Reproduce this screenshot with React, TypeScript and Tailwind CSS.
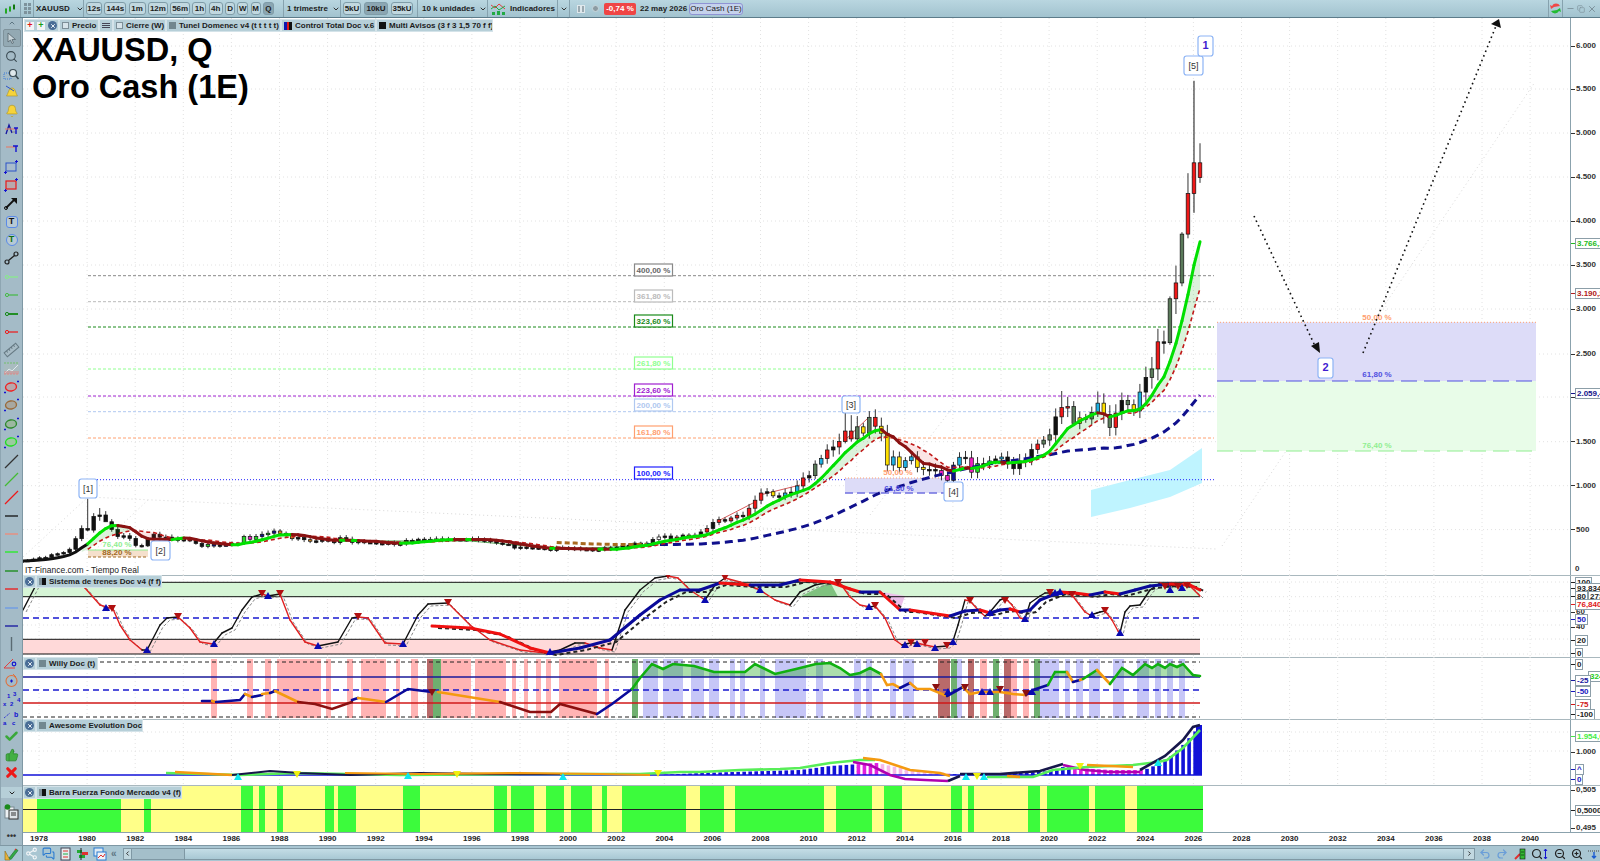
import React from "react";
import { Bell, Search, ZoomIn, ZoomOut, Share2, MessagesSquare, Undo2, Redo2, ThumbsUp, Check, X, ChevronDown, ChevronUp, ChevronLeft, ChevronRight, Minus, Copy } from "lucide-react";

type Pt = [number, number];

const closes = [
  140,145,150,165, 180,185,215,226, 240,277,397,512, 494,650,666,589, 500,420,430,400, 320,315,397,448, 414,414,395,381, 388,375,343,309,
  330,317,326,327, 345,345,420,390, 420,447,459,484, 458,436,397,410, 385,372,367,401, 368,352,408,391, 355,367,354,353, 341,343,349,332,
  337,378,355,391, 390,385,394,383, 391,387,384,387, 396,382,379,369, 348,334,332,290, 301,296,293,288, 279,261,299,290, 277,288,273,274,
  258,270,293,276, 302,318,323,347, 334,346,388,416, 427,395,415,438, 427,437,473,513, 582,613,599,632, 663,650,743,834, 916,930,884,880,
  916,926,996,1087, 1113,1244,1307,1405, 1439,1500,1620,1531, 1668,1597,1776,1675, 1595,1234,1326,1205, 1283,1327,1208,1184, 1183,1172,1115,1060,
  1233,1322,1315,1152, 1249,1241,1280,1303, 1325,1252,1192,1281, 1292,1409,1472,1517, 1577,1781,1886,1898, 1707,1770,1757,1829, 1937,1807,1660,1824,
  1969,1919,1849,2063, 2230,2326,2634,2624, 3123,3303,3858,4319, 4668,4500,
];
const N = closes.length;
const P = (p: number) => 45.6 + (6000 - p) * 0.088;
const XI = (i: number) => 1200 - (N - 1 - i) * 6.0125;
const sma = (i: number, n: number) => {
  const s = closes.slice(Math.max(0, i - n + 1), i + 1);
  return s.reduce((a, b) => a + b, 0) / s.length;
};
const colorMap: Record<string, string> = { k: "#111111", r: "#f01818", y: "#ffe000", c: "#20b0e0", m: "#f020c0", g: "#20e020", b: "#101090", d: "#5a7a5a", w: "#ffffff", o: "#e89020", n: "#a06820" };
const colorStr = ("kkkkwkkrkrkkrkrkrrkr" + "rrkykckcrkdcrkrrrdydryycyccyykkmmbckmgkc" + "kckkkdkrddkrrdyrdcydrkdyckdrk" + "drdrrr").padStart(N, "k");
const earlyColor: [number, string][] = [[208,"g"],[216,"b"],[228,"b"],[240,"b"],[244,"g"],[250,"m"],[256,"g"],[262,"b"],[268,"g"],[275,"b"],[280,"o"],[292,"o"],[310,"o"]];
const candleColor = (i: number) => {
  const x = XI(i);
  const e = earlyColor.find((c) => Math.abs(c[0] - x) < 3);
  return colorMap[e ? e[1] : colorStr[i]];
};
const hiLo: Record<number, [number, number]> = {
  0: [4890, 4440], 1: [5600, 4100], 2: [4550, 3810], 3: [3880, 3265], 4: [3500, 2950], 5: [3150, 2600],
  185: [850, 480], 183: [745, 600], 182: [710, 600], 59: [1938, 1480], 58: [1800, 1500], 57: [1790, 1500], 23: [2075, 1700], 17: [2070, 1780], 21: [1960, 1680],
};
const Candles = () => (
  <g>
    {closes.map((c, i) => {
      if (i === 0) return null;
      const o = closes[i - 1];
      const back = N - 1 - i;
      const wob = 0.02 + 0.035 * Math.abs(Math.sin(i * 12.9898));
      const [hi, lo] = hiLo[back] ?? [Math.max(o, c) * (1 + wob) + 8, Math.min(o, c) * (1 - wob) - 6];
      const x = XI(i);
      const t = P(Math.max(o, c));
      const b = P(Math.min(o, c));
      return (
        <g key={i}>
          <line x1={x} x2={x} y1={P(hi)} y2={P(lo)} stroke={back === 1 ? "#111" : "#333"} strokeWidth={1} />
          <rect x={x - 1.8} y={t} width={3.6} height={Math.max(b - t, 1.5)} fill={candleColor(i)} stroke="#111" strokeWidth={0.7} />
        </g>
      );
    })}
  </g>
);
const line = (pts: Pt[]) => pts.map((p) => p[0].toFixed(1) + "," + p[1].toFixed(1)).join(" ");
const Segs = ({ pts, up, down, w }: { pts: Pt[]; up: string; down: string; w: number }) => (
  <g>
    {pts.slice(1).map((p, i) => (
      <line key={i} x1={pts[i][0]} y1={pts[i][1]} x2={p[0]} y2={p[1]} stroke={p[1] <= pts[i][1] ? up : down} strokeWidth={w} strokeLinecap="round" />
    ))}
  </g>
);
const Tri = ({ x, y, up, c }: { x: number; y: number; up: boolean; c: string }) => (
  <polygon points={up ? `${x - 4},${y + 3} ${x + 4},${y + 3} ${x},${y - 4}` : `${x - 4},${y - 4} ${x + 4},${y - 4} ${x},${y + 3}`} fill={c} />
);
const Grid = ({ ys, top, bottom }: { ys: number[]; top: number; bottom: number }) => (
  <g stroke="#e2e2e2" strokeWidth={1} strokeDasharray="1 3">
    {Array.from({ length: 32 }, (_, k) => 39 + 48.1 * k).map((x) => (
      <line key={x} x1={x} x2={x} y1={top} y2={bottom} />
    ))}
    {ys.map((y) => (
      <line key={y} x1={23} x2={1570} y1={y} y2={y} />
    ))}
  </g>
);

const fibs: [string, number, number, number, string, string][] = [
  ["400,00 %", 275.7, 264, 276, "#888888", "3 2"],
  ["361,80 %", 301.7, 290, 302, "#bbbbbb", "3 2"],
  ["323,60 %", 327, 315, 327, "#1a8a1a", "3 2"],
  ["261,80 %", 369, 357, 369, "#90ff90", "3 2"],
  ["223,60 %", 396, 384, 396, "#a020d0", "3 2"],
  ["200,00 %", 411.7, 399, 411, "#b0c8f0", "3 2"],
  ["161,80 %", 438, 426, 438, "#ffa070", "3 2"],
  ["100,00 %", 479.7, 467, 479, "#2020ff", "1 2"],
];
const Box = ({ x, y, w, h, t, c = "#333333", big = false }: { x: number; y: number; w: number; h: number; t: string; c?: string; big?: boolean }) => (
  <g>
    <rect x={x} y={y} width={w} height={h} rx={2.5} fill="#ffffff" stroke="#8db4f5" strokeWidth={1.2} />
    <text x={x + w / 2} y={y + h / 2 + 3} textAnchor="middle" fontSize={big ? 11 : 9} fontWeight={big ? 700 : 400} fill={c}>{t}</text>
  </g>
);
const Pct = ({ x, y, t, c }: { x: number; y: number; t: string; c: string }) => (
  <text x={x} y={y} textAnchor="middle" fontSize={8} fontWeight={700} fill={c}>{t}</text>
);

const MainChart = () => {
  const idx = closes.map((_, i) => i);
  const g = idx.map((i) => [XI(i), P(sma(i, 7))] as Pt);
  const r = idx.map((i) => [XI(i), P(sma(i, 11))] as Pt);
  const n = idx.map((i) => [XI(i), P(sma(i, 40))] as Pt);
  return (
    <svg viewBox="23 18 1547 557" width={1547} height={557} className="block">
      <Grid ys={[46, 89, 133, 177, 221, 265, 309, 354, 397, 441.7, 485.7, 529.6]} top={18} bottom={575} />
      <polyline points="23,557 88,497 1216,549" fill="none" stroke="#d8d8d8" strokeDasharray="1 3" />
      <polyline points="95,550 148,500" fill="none" stroke="#d8d8d8" strokeDasharray="1 3" />
      <polyline points="870,515 953,407" fill="none" stroke="#d8d8d8" strokeDasharray="1 3" />
      <polyline points="1222,546 1535,82" fill="none" stroke="#d8d8d8" strokeDasharray="1 3" />
      <polyline points="342,541 470,541 560,549 640,546" fill="none" stroke="#2a8a2a" strokeWidth={0.8} />
      {/* right retracement box */}
      <rect x={1217} y={322.3} width={319} height={58.7} fill="#dddcf8" />
      <rect x={1217} y={381} width={319} height={70} fill="#e8fce8" />
      <line x1={1217} x2={1536} y1={322.3} y2={322.3} stroke="#ffa070" strokeDasharray="1 2" />
      <line x1={1217} x2={1536} y1={381} y2={381} stroke="#5050e0" strokeDasharray="16 7" />
      <line x1={1217} x2={1536} y1={451} y2={451} stroke="#90ee90" strokeDasharray="16 7" />
      {/* cyan area */}
      <polygon points="1091,490 1130,480 1170,470 1202,448 1202,483 1170,497 1130,508 1091,517" fill="#bff4ff" />
      {fibs.map((f) => (
        <line key={f[0]} x1={88} x2={1214} y1={f[1]} y2={f[1]} stroke={f[4]} strokeDasharray={f[5]} strokeWidth={1} />
      ))}
      {/* small retracements */}
      <rect x={88} y={550} width={60} height={7} fill="#f5e0cc" />
      <line x1={88} x2={148} y1={550} y2={550} stroke="#90ee90" />
      <line x1={88} x2={148} y1={557} y2={557} stroke="#a06820" strokeDasharray="3 2" />
      <rect x={845} y={478} width={102} height={15} fill="#dddcf8" />
      <line x1={845} x2={947} y1={478} y2={478} stroke="#ffa070" strokeDasharray="1 2" />
      <line x1={845} x2={947} y1={493} y2={493} stroke="#7070e0" strokeWidth={1.5} strokeDasharray="8 4" />
      <polyline points="720,520 755,502" fill="none" stroke="#d03030" strokeWidth={0.8} />
      <polyline points="760,495 800,485" fill="none" stroke="#d03030" strokeWidth={0.8} />
      <polyline points="845,440 868,418" fill="none" stroke="#d03030" strokeWidth={0.8} />
      <Candles />
      {g.slice(12).map((p, k) => {
        const i = k + 12;
        const q = r[i];
        const pg = g[i - 1];
        const pr = r[i - 1];
        return <polygon key={i} points={line([pg, p, q, pr])} fill={p[1] <= q[1] ? "#00a000" : "#e04040"} fillOpacity={0.14} />;
      })}
      <polyline points={line(n.slice(90, 106))} fill="none" stroke="#a86a20" strokeWidth={3} strokeDasharray="5 3" />
      <polyline points={line(n.slice(105))} fill="none" stroke="#10108c" strokeWidth={3} strokeDasharray="8 5" />
      <polyline points={line(r.slice(12))} fill="none" stroke="#c01818" strokeWidth={1.6} strokeDasharray="4 3" />
      <polyline points={line(g.slice(0, 13))} fill="none" stroke="#111111" strokeWidth={3} />
      <Segs pts={g.slice(12)} up="#00e000" down="#8a1212" w={3} />
      {/* labels */}
      {fibs.map((f) => (
        <g key={f[0] + "b"}>
          <rect x={634.5} y={f[2]} width={38} height={f[3] - f[2]} fill="#ffffff" stroke={f[4]} strokeWidth={1.2} />
          <text x={653.5} y={f[3] - 3} textAnchor="middle" fontSize={8} fontWeight={700} fill={f[4] === "#888888" ? "#666" : f[4]}>{f[0]}</text>
        </g>
      ))}
      <Pct x={117} y={547} t="76,40 %" c="#90ee90" />
      <Pct x={117} y={555} t="88,20 %" c="#a06820" />
      <Pct x={898} y={475} t="50,00 %" c="#ffa070" />
      <Pct x={899} y={491} t="61,80 %" c="#5050e0" />
      <Pct x={1377} y={320} t="50,00 %" c="#ffa070" />
      <Pct x={1377} y={377} t="61,80 %" c="#5050e0" />
      <Pct x={1377} y={448} t="76,40 %" c="#90ee90" />
      <Box x={79} y={479} w={18} h={19} t="[1]" />
      <Box x={151} y={541} w={19} h={19} t="[2]" />
      <Box x={842} y={396} w={18} h={17} t="[3]" />
      <Box x={944} y={482} w={19} h={19} t="[4]" />
      <Box x={1184} y={56} w={19} h={19} t="[5]" />
      <Box x={1198} y={36} w={15} h={20} t="1" c="#4020d0" big />
      <Box x={1318} y={358} w={15} h={20} t="2" c="#4020d0" big />
      {/* arrows */}
      <line x1={1254} y1={216} x2={1315} y2={346} stroke="#111" strokeWidth={1.6} strokeDasharray="1.6 3.4" />
      <polygon points="1311,346 1319,342 1320,353" fill="#111" />
      <line x1={1363} y1={353} x2={1496} y2={26} stroke="#111" strokeWidth={1.6} strokeDasharray="1.6 3.4" />
      <polygon points="1491,24 1499,19 1501,28" fill="#111" />
      <text x={25} y={573} fontSize={8.5} fill="#222222">IT-Finance.com - Tiempo Real</text>
    </svg>
  );
};

const sisThin: Pt[] = [[23,610],[36,585],[50,576],[70,578],[85,588],[100,605],[113,609],[120,625],[130,640],[142,650],[147,650],[160,625],[167,618],[178,617],[190,628],[200,642],[213,644],[222,633],[232,628],[242,610],[252,597],[262,594],[268,596],[280,594],[290,620],[305,642],[318,646],[338,642],[352,618],[358,617],[368,618],[385,643],[403,644],[418,615],[428,604],[448,603],[470,625],[490,640],[520,650],[545,653],[560,650],[575,643],[585,643],[600,648],[612,650],[625,610],[640,590],[655,578],[668,576],[678,578],[690,590],[705,600],[715,585],[725,578],[740,582],[760,590],[775,600],[790,605],[800,592],[815,585],[830,582],[840,583],[850,597],[860,605],[870,607],[875,606],[885,618],[895,640],[902,645],[910,643],[917,643],[925,645],[935,647],[947,646],[953,641],[958,625],[965,600],[970,601],[980,612],[985,616],[990,612],[1000,600],[1005,598],[1012,605],[1020,618],[1025,619],[1030,603],[1040,596],[1045,593],[1055,593],[1060,592],[1072,595],[1085,612],[1090,615],[1097,613],[1100,612],[1105,611],[1112,620],[1118,631],[1120,633],[1125,612],[1130,606],[1140,605],[1150,590],[1160,583],[1170,586],[1180,584],[1190,586],[1200,596]];
const sisThick: Pt[] = [[432,626],[470,628],[500,634],[530,648],[550,653],[580,648],[610,640],[640,615],[660,600],[680,590],[700,590],[720,583],[750,585],[780,585],[800,580],[830,582],[850,589],[860,592],[880,592],[900,610],[910,610],[950,616],[965,611],[980,610],[990,613],[1000,610],[1010,609],[1020,612],[1030,610],[1040,600],[1060,592],[1075,593],[1090,595],[1105,592],[1120,594],[1135,590],[1150,586],[1170,584],[1190,585],[1200,590]];
const downTs: Pt[] = [[112,609],[178,617],[262,594],[280,594],[358,617],[448,603],[668,576],[725,578],[838,583],[875,606],[911,643],[925,643],[947,646],[970,601],[1005,601],[1050,593],[1072,595],[1105,611],[1165,587],[1178,587],[1187,586]];
const upTs: Pt[] = [[106,608],[147,650],[214,644],[268,596],[318,646],[403,644],[550,652],[705,600],[760,590],[869,607],[905,645],[917,644],[935,648],[953,642],[990,613],[1025,619],[1055,593],[1060,592],[1092,615],[1120,633],[1170,590],[1182,588]];

const SistemaChart = () => (
  <svg viewBox="23 575 1547 82" width={1547} height={82} className="block">
    <Grid ys={[582, 596.7, 611, 625, 639, 654]} top={575} bottom={657} />
    <rect x={23} y={582.3} width={1177} height={14.4} fill="#d6f5d6" />
    <rect x={23} y={639.3} width={1177} height={14.7} fill="#ffd9d9" />
    <polygon points="800,596.7 830,582 838,596.7" fill="#7fc27f" />
    <polygon points="882,592 900,610 905,596" fill="#ecc0ea" />
    <g stroke="#111" strokeWidth={1}>
      <line x1={23} x2={1200} y1={582.3} y2={582.3} />
      <line x1={23} x2={1200} y1={596.7} y2={596.7} />
      <line x1={23} x2={1200} y1={639.3} y2={639.3} />
      <line x1={23} x2={1200} y1={654} y2={654} />
    </g>
    <line x1={23} x2={1200} y1={618} y2={618} stroke="#1818d0" strokeWidth={1.5} strokeDasharray="6 4" />
    <polyline points={line(sisThin.map((p) => [p[0] + 3, p[1] + 2] as Pt))} fill="none" stroke="#888" strokeWidth={1} strokeDasharray="3 2" />
    <Segs pts={sisThin} up="#111111" down="#e02020" w={1.4} />
    <polyline points={line(sisThick.map((p) => [p[0] + 6, p[1] + 2] as Pt))} fill="none" stroke="#222" strokeWidth={2} strokeDasharray="4 3" />
    <Segs pts={sisThick} up="#0a0a9a" down="#f01010" w={3} />
    {downTs.map((t) => <Tri key={"d" + t[0]} x={t[0]} y={t[1]} up={false} c="#b01010" />)}
    {upTs.map((t) => <Tri key={"u" + t[0]} x={t[0]} y={t[1]} up c="#0a0ab0" />)}
  </svg>
);

const willyBands: [number, number, string][] = [
  [211,217,"#ffb3b3"],[247,253,"#ffb3b3"],[265,271,"#ffb3b3"],[277,321,"#ffb3b3"],[326,331,"#ffb3b3"],[347,353,"#ffb3b3"],[361,386,"#ffb3b3"],[396,400,"#ffb3b3"],[411,418,"#ffb3b3"],[427,433,"#b96a6a"],[433,441,"#6fb06f"],[441,471,"#ffb3b3"],[475,506,"#ffb3b3"],[512,516,"#ffb3b3"],[524,528,"#ffb3b3"],[536,541,"#ffb3b3"],[546,551,"#ffb3b3"],[559,597,"#ffb3b3"],[605,609,"#ffb3b3"],[632,638,"#6fb06f"],
  [643,658,"#c6c6f7"],[663,683,"#c6c6f7"],[691,704,"#c6c6f7"],[709,719,"#c6c6f7"],[730,735,"#c6c6f7"],[740,745,"#c6c6f7"],[760,765,"#c6c6f7"],[775,806,"#c6c6f7"],[816,823,"#c6c6f7"],
  [854,861,"#c6c6f7"],[866,872,"#c6c6f7"],[890,896,"#c6c6f7"],[903,914,"#c6c6f7"],[938,950,"#b96a6a"],[951,957,"#6fb06f"],[957,962,"#c6c6f7"],[968,974,"#b96a6a"],[980,987,"#ffb3b3"],[993,999,"#6fb06f"],[1004,1011,"#b96a6a"],[1011,1017,"#ffb3b3"],[1023,1029,"#ffb3b3"],[1034,1040,"#6fb06f"],[1040,1059,"#c6c6f7"],[1065,1070,"#c6c6f7"],[1076,1083,"#c6c6f7"],[1089,1100,"#c6c6f7"],[1113,1124,"#c6c6f7"],[1137,1149,"#c6c6f7"],[1155,1161,"#c6c6f7"],[1167,1173,"#c6c6f7"],[1179,1185,"#c6c6f7"],
];
const wc = { n: "#0a0a9a", o: "#f49a10", g: "#10b010", r: "#8a1010" };
const willy: [string, Pt[]][] = [
  [wc.n, [[202,701],[212,701]]],
  [wc.o, [[212,701],[216,702]]],
  [wc.n, [[216,702],[240,700],[245,694]]],
  [wc.o, [[245,694],[252,697]]],
  [wc.n, [[252,697],[262,695]]],
  [wc.o, [[262,694],[270,693]]],
  [wc.n, [[270,693],[275,691]]],
  [wc.o, [[275,691],[298,702]]],
  [wc.r, [[298,702],[315,704],[332,709],[352,702]]],
  [wc.n, [[352,700],[358,698]]],
  [wc.o, [[358,698],[386,702]]],
  [wc.n, [[386,702],[408,689],[432,692]]],
  [wc.o, [[438,692],[500,702]]],
  [wc.r, [[500,702],[530,712],[551,712],[560,704],[597,714]]],
  [wc.n, [[597,714],[612,704],[632,689]]],
  [wc.g, [[632,689],[640,678],[652,664],[663,669],[673,664],[694,666],[714,672],[745,672],[755,664],[775,674],[796,669],[816,664],[830,663],[840,668],[850,675],[860,673],[870,668],[881,674]]],
  [wc.o, [[881,674],[887,685],[893,684],[900,688]]],
  [wc.n, [[900,688],[910,683]]],
  [wc.o, [[910,683],[917,689],[930,689],[947,696]]],
  [wc.n, [[947,696],[963,687]]],
  [wc.o, [[963,687],[970,694],[980,692],[1000,692],[1013,694],[1026,695]]],
  [wc.n, [[1026,695],[1033,690],[1048,685]]],
  [wc.g, [[1048,685],[1055,672],[1067,672]]],
  [wc.o, [[1067,672],[1073,682]]],
  [wc.n, [[1073,682],[1080,680]]],
  [wc.o, [[1080,680],[1083,679]]],
  [wc.g, [[1083,679],[1097,670]]],
  [wc.o, [[1097,670],[1110,684]]],
  [wc.g, [[1110,684],[1122,668],[1133,675],[1145,664],[1152,668],[1158,664],[1165,668],[1170,664],[1177,667],[1183,664],[1193,675],[1200,676]]],
];
const WillyChart = () => (
  <svg viewBox="23 657 1547 62" width={1547} height={62} className="block">
    <Grid ys={[] as number[]} top={657} bottom={719} />
    {willyBands.map((b) => <rect key={b[0]} x={b[0]} y={659} width={b[1] - b[0]} height={59} fill={b[2]} />)}
    <polygon points="632,677 640,678 652,664 663,669 673,664 694,666 714,672 745,672 755,664 775,674 796,669 816,664 830,663 840,668 850,675 860,673 870,668 881,674 881,677" fill="#10a010" fillOpacity={0.35} />
    <polygon points="1055,677 1055,672 1067,672 1073,677 1085,677 1097,670 1105,677 1115,677 1122,668 1133,675 1145,664 1152,668 1158,664 1165,668 1170,664 1177,667 1183,664 1193,675 1200,676 1200,677" fill="#10a010" fillOpacity={0.35} />
    <line x1={23} x2={1200} y1={662} y2={662} stroke="#222" strokeDasharray="4 3" />
    <line x1={23} x2={1200} y1={677} y2={677} stroke="#1a1a9a" strokeWidth={1.6} />
    <line x1={23} x2={1200} y1={690} y2={690} stroke="#1818d0" strokeWidth={1.5} strokeDasharray="6 4" />
    <line x1={23} x2={1200} y1={703} y2={703} stroke="#d01818" strokeWidth={1.4} />
    <line x1={23} x2={1200} y1={717} y2={717} stroke="#222" strokeDasharray="4 3" />
    {willy.map((s, i) => <polyline key={i} points={line(s[1])} fill="none" stroke={s[0]} strokeWidth={2.6} strokeLinecap="round" />)}
    {[[432,693],[936,688],[965,688],[1000,690],[1026,694]].map((t) => <Tri key={"wd" + t[0]} x={t[0]} y={t[1]} up={false} c="#8a1010" />)}
    {[[948,692],[982,692],[990,692],[1032,692]].map((t) => <Tri key={"wu" + t[0]} x={t[0]} y={t[1]} up c="#0a0ab0" />)}
  </svg>
);

const interp = (tbl: Pt[], x: number) => {
  for (let i = 1; i < tbl.length; i++) {
    if (x <= tbl[i][0]) {
      const [x0, y0] = tbl[i - 1];
      const [x1, y1] = tbl[i];
      return y0 + ((x - x0) / (x1 - x0)) * (y1 - y0);
    }
  }
  return tbl[tbl.length - 1][1];
};
const barTop: Pt[] = [[660,775],[700,773],[800,770],[830,766],[860,764],[877,763],[910,770],[947,773],[960,775],[990,775],[1050,771],[1063,767],[1110,770],[1143,770],[1150,768],[1170,757],[1183,745],[1200,726]];
const barColor = (x: number) => {
  if (x >= 853 && x < 877) return "#e020e0";
  if (x >= 877 && x < 950) return "#f5b8e8";
  if (x >= 1070 && x < 1143) return "#e020e0";
  return "#1212d8";
};
const AwesomeChart = () => {
  const xs: number[] = [];
  for (let x = 660; x <= 1200; x += 6.0125) xs.push(x);
  return (
    <svg viewBox="23 719 1547 66" width={1547} height={66} className="block">
      <Grid ys={[732, 751]} top={719} bottom={785} />
      {xs.map((x) => {
        const t = interp(barTop, x);
        return <rect key={x} x={x - 1.8} y={t} width={3.6} height={775 - t} fill={barColor(x)} />;
      })}
      <rect x={1196} y={725} width={6} height={50} fill="#1212d8" />
      <line x1={23} x2={1202} y1={775} y2={775} stroke="#1212d8" strokeWidth={1.5} />
      <polyline points="166,773 240,775 295,773 400,775 520,774 640,774 680,772 700,772 740,770 780,769 800,768 830,763 860,760 875,760" fill="none" stroke="#58ee58" strokeWidth={2.6} />
      <polyline points="232,775 270,771 300,773 350,775 420,773 490,774 560,774" fill="none" stroke="#16164a" strokeWidth={2} />
      <polyline points="175,772 232,775" fill="none" stroke="#f49a10" strokeWidth={2.6} />
      <polyline points="345,773 420,774 520,773 600,774 650,775" fill="none" stroke="#f49a10" strokeWidth={2.2} />
      <polyline points="863,758 880,760 910,770 940,773 950,776" fill="none" stroke="#f49a10" strokeWidth={2.6} />
      <polyline points="853,762 870,765 890,775 905,779 925,780 948,781" fill="none" stroke="#b000b0" strokeWidth={2.6} />
      <polyline points="948,781 960,776" fill="none" stroke="#16164a" strokeWidth={2.6} />
      <polyline points="960,774 1000,774 1040,771 1063,764" fill="none" stroke="#16164a" strokeWidth={2.6} />
      <polyline points="1063,765 1085,770 1110,772 1140,772" fill="none" stroke="#b000b0" strokeWidth={2.6} />
      <polyline points="987,777 1033,777 1053,770 1087,767 1133,765 1158,762 1167,760 1183,748 1200,730" fill="none" stroke="#58ee58" strokeWidth={2.6} />
      <polyline points="1087,765 1133,767" fill="none" stroke="#f49a10" strokeWidth={2.6} />
      <polyline points="1007,776 1020,777" fill="none" stroke="#f49a10" strokeWidth={2.6} />
      <polyline points="1140,770 1165,756 1183,740 1193,727 1200,725" fill="none" stroke="#16164a" strokeWidth={2.6} />
      {[[238,777],[408,776],[563,777],[966,777],[984,777],[1158,763]].map((t) => <Tri key={t[0]} x={t[0]} y={t[1]} up c="#10e8f0" />)}
      {[[297,775],[457,775],[658,774],[977,777],[1080,767]].map((t) => <Tri key={t[0]} x={t[0]} y={t[1]} up={false} c="#f0f010" />)}
    </svg>
  );
};

const greenBars: Pt[] = [[37,121],[144,151],[241,253],[259,265],[277,283],[325,334],[338,356],[403,420],[494,507],[511,534],[546,564],[571,592],[602,607],[622,686],[700,724],[735,800],[800,824],[836,872],[884,902],[951,962],[968,974],[1028,1040],[1047,1089],[1095,1125],[1137,1203]];
const BarraChart = () => (
  <div className="relative w-full h-full">
    <div className="absolute inset-y-0 left-0 w-[1180px] bg-[#ffff88]" />
    {greenBars.map((b) => (
      <div key={b[0]} className="absolute inset-y-0 bg-[#3cfb3c]" style={{ left: b[0] - 23, width: b[1] - b[0] }} />
    ))}
    <div className="absolute left-0 w-[1180px] top-[23px] h-px bg-[#222222]" />
  </div>
);

/* axis */
const AxisText = ({ y, t, c = "#333333" }: { y: number; t: string; c?: string }) => (
  <div className="absolute left-0 flex items-center h-[10px] -mt-[5px]" style={{ top: y }}>
    <div className="w-[4px] h-px shrink-0" style={{ backgroundColor: c }} />
    <span className="ml-[1px] text-[8px] leading-none font-bold" style={{ color: c }}>{t}</span>
  </div>
);
const AxisBox = ({ y, t, c = "#222222", x = 0 }: { y: number; t: string; c?: string; x?: number }) => (
  <div className="absolute flex items-center h-[11px] -mt-[5.5px]" style={{ top: y, left: x }}>
    {x === 0 && <div className="w-[4px] h-px shrink-0" style={{ backgroundColor: c }} />}
    <span className="px-[1px] text-[8px] leading-[9px] font-bold bg-white border border-[#8c9ea8] whitespace-nowrap" style={{ color: c }}>{t}</span>
  </div>
);
const Axis = ({ top, children }: { top: number; children: React.ReactNode }) => (
  <div className="relative w-[30px] shrink-0 border-l border-[#8ba2ad] overflow-hidden bg-white">
    <div className="absolute left-0 right-0" style={{ top: -top }}>{children}</div>
  </div>
);

const Swatch = ({ kind }: { kind: string }) => {
  if (kind === "empty") return <span className="w-[7px] h-[7px] border border-[#7d8f98] bg-[#d7e4ea] shrink-0" />;
  if (kind === "gray") return <span className="w-[7px] h-[7px] bg-[#72878f] shrink-0" />;
  if (kind === "black") return <span className="w-[7px] h-[7px] bg-[#111111] shrink-0" />;
  if (kind === "half") return <span className="w-[7px] h-[7px] border-l-[3px] border-l-[#7d8f98] bg-[#111111] shrink-0" />;
  return (
    <span className="flex w-[8px] h-[8px] shrink-0">
      <span className="flex-1 bg-[#1018b0]" />
      <span className="flex-1 bg-[#e01818]" />
      <span className="flex-1 bg-[#111111]" />
    </span>
  );
};
const CloseDot = () => (
  <span className="flex items-center justify-center w-[9px] h-[9px] rounded-full bg-[#4a6d96] shrink-0">
    <X size={6} strokeWidth={4} color="#e8eef4" />
  </span>
);
const LegendTag = ({ w, kind, t }: { w: string; kind: string; t: string }) => (
  <span className={"flex items-center gap-[3px] h-[13px] pl-[2px] bg-[#b6cfd8] border border-[#d4e3e9] text-[8px] font-bold text-[#1c1c1c] whitespace-nowrap overflow-hidden " + w}>
    <Swatch kind={kind} />
    {t}
  </span>
);
const PaneLegend = ({ kind, t, w, top }: { kind: string; t: string; w: string; top: string }) => (
  <div className={"absolute left-0 flex items-stretch h-[13px] " + top}>
    <span className="flex items-center justify-center w-[13px] bg-[#b6cfd8] border border-[#d4e3e9]">
      <CloseDot />
    </span>
    <LegendTag w={w} kind={kind} t={t} />
  </div>
);

/* toolbar */
const tfs: [string, string, boolean][] = [
  ["12s", "w-[16px]", false], ["144s", "w-[22px]", false], ["1m", "w-[17px]", false], ["12m", "w-[20px]", false], ["56m", "w-[20px]", false],
  ["1h", "w-[14px]", false], ["4h", "w-[14px]", false], ["D", "w-[10px]", false], ["W", "w-[11px]", false], ["M", "w-[10px]", false], ["Q", "w-[11px]", true],
];
const TbBtn = ({ t, w, active }: { t: string; w: string; active?: boolean }) => (
  <span className={"flex items-center justify-center h-[13px] rounded-[3px] border border-[#7f9ca8] text-[8px] font-bold text-[#1c1c1c] " + w + (active ? " bg-[#8ba6b2]" : " bg-[#c1d8e0]")}>{t}</span>
);
const Chev = () => <ChevronDown size={8} strokeWidth={3} color="#333333" className="shrink-0" />;
const TopBar = () => (
  <div className="flex items-stretch h-[18px] shrink-0 bg-gradient-to-b from-[#b9d6e0] to-[#a2c3cf] border-b border-[#5d7c8a] text-[8px] font-bold text-[#1c1c1c] whitespace-nowrap">
    <div className="flex items-center justify-center w-[21px] border-r border-[#86a2ae]">
      <svg width="13" height="12" viewBox="0 0 13 12"><path d="M2 5v6M6 3v6M10 1v6" stroke="#1a8a1a" strokeWidth="1" /><rect x="1" y="6" width="2" height="4" fill="#22aa22" /><rect x="5" y="4" width="2" height="4" fill="#22aa22" /><rect x="9" y="2" width="2" height="4" fill="#117711" /></svg>
    </div>
    <div className="flex items-center justify-center w-[13px] border-r border-[#86a2ae]">
      <svg width="7" height="12" viewBox="0 0 7 12"><path d="M0 0h3v3H0zM4 0h3v3H4zM0 4h3v3H0zM4 4h3v3H4zM0 8h3v3H0zM4 8h3v3H4z" fill="#7d929c" /></svg>
    </div>
    <div className="flex items-center gap-[6px] w-[50px] pl-[2px] border-r border-[#86a2ae]">XAUUSD <Chev /></div>
    <div className="flex items-center gap-[2.3px] w-[200px] pl-[2px] border-r border-[#86a2ae]">
      {tfs.map((b) => <TbBtn key={b[0]} t={b[0]} w={b[1]} active={b[2]} />)}
    </div>
    <div className="flex items-center gap-[4px] w-[57px] pl-[3px] border-r border-[#86a2ae]">1 trimestre <Chev /></div>
    <div className="flex items-center gap-[3px] w-[77px] pl-[2px] border-r border-[#86a2ae]">
      <TbBtn t="5kU" w="w-[18px]" />
      <TbBtn t="10kU" w="w-[24px]" active />
      <TbBtn t="35kU" w="w-[22px]" />
    </div>
    <div className="flex items-center gap-[4px] w-[70px] pl-[4px] border-r border-[#86a2ae]">10 k unidades <Chev /></div>
    <div className="flex items-center gap-[4px] w-[70px] pl-[3px] border-r border-[#86a2ae]">
      <svg width="15" height="14" viewBox="0 0 15 14"><path d="M0 3 4 6 8 2 14 7" fill="none" stroke="#e04040" strokeWidth="1" /><path d="M0 7 4 4 8 8 14 4" fill="none" stroke="#22aa44" strokeWidth="1" /><path d="M1 13V10h3v3zM6 13V9h3v4zM11 13V10h3v3z" fill="#22aa44" /></svg>
      Indicadores
    </div>
    <div className="flex items-center justify-center w-[12px] border-r border-[#86a2ae]"><Chev /></div>
    <div className="flex items-center w-[978px] pl-[7px]">
      <svg width="8" height="8" viewBox="0 0 8 8"><rect width="8" height="8" fill="#dfe8ec" /><path d="M2 1v6M6 1v6" stroke="#8a9aa2" strokeWidth="1.6" /></svg>
      <span className="ml-[7px] w-[7px] h-[7px] rounded-full bg-[#8c9ba2] border border-[#c9d8de]" />
      <span className="ml-[5px] flex items-center justify-center w-[32px] h-[12px] rounded-[2px] bg-[#ef4545] text-white">-0,74 %</span>
      <span className="ml-[4px] w-[46px]">22 may 2026</span>
      <span className="ml-[3px] flex items-center justify-center w-[54px] h-[12px] rounded-[3px] bg-[#c5d2ec] border border-[#8f93d4] font-normal">Oro Cash (1E)</span>
    </div>
    <div className="flex items-center justify-center w-[15px] border-x border-[#86a2ae]">
      <svg width="13" height="13" viewBox="0 0 13 13"><path d="M11 4A4.5 4.5 0 0 0 3 4L1 3l1 4 3-2z" fill="#f04848" /><path d="M2 9a4.5 4.5 0 0 0 8 0l2 1-1-4-3 2z" fill="#22bb33" /></svg>
    </div>
    <div className="flex items-center justify-around w-[37px] px-[2px]">
      <Minus size={9} strokeWidth={2.4} color="#7d929c" />
      <Copy size={8} strokeWidth={2} color="#7d929c" />
      <X size={10} strokeWidth={2.4} color="#7d929c" />
    </div>
  </div>
);

/* side bar */
const S = ({ children }: { children: React.ReactNode }) => <svg width="17" height="16" viewBox="0 0 17 16" className="block">{children}</svg>;
const lolli = (c: string, w = 1.2) => <S><circle cx="4" cy="8" r="1.6" fill="none" stroke={c} /><path d="M5.6 8H15" stroke={c} strokeWidth={w} /></S>;
const ell = (c: string, fill: string) => <S><ellipse cx="8" cy="8" rx="5.5" ry="4" fill={fill} stroke={c} strokeWidth="1.4" transform="rotate(-10 8 8)" /><path d="M14 2.5h2M15 1.5v2M1 13.500h2M2 12.500v2" stroke="#1414d0" strokeWidth="1" /></S>;
const dia = (c: string) => <S><path d="M2 15 15 2" stroke={c} strokeWidth="1.2" /></S>;
const hl = (c: string) => <S><path d="M2 8H15" stroke={c} strokeWidth="1.3" /></S>;
const sideIcons: React.ReactNode[] = [
  <div className="flex items-center justify-center w-[18px] h-[18px] bg-[#93a9b3] border border-[#7f929b] rounded-[2px]"><svg width="9" height="12" viewBox="0 0 9 12"><path d="M1 1v9l2.500-2 1.500 3.500 1.500-.7L5 7.500h3.500z" fill="#c8d4d9" stroke="#55656d" strokeWidth=".8" /></svg></div>,
  <Search size={13} strokeWidth={2} color="#3a4a52" />,
  <S><rect x="1" y="6" width="7" height="6" fill="none" stroke="#3a7ad8" strokeDasharray="1 1" /><circle cx="10" cy="6" r="3.500" fill="#dfe8ec" stroke="#3a4a52" strokeWidth="1.2" /><path d="M12.500 8.500 15.500 12" stroke="#3a4a52" strokeWidth="1.6" /></S>,
  <S><path d="M9 3C5.500 3 5.500 8 3.500 11h11C12.500 8 12.500 3 9 3z" fill="#f6d33a" stroke="#a8902a" strokeWidth=".6" /><path d="M3 1l8 5" stroke="#2a52c8" strokeWidth="1" /></S>,
  <Bell size={14} fill="#f6d33a" color="#b09a2a" strokeWidth={1.2} />,
  <S><path d="M3 12 6 3l3 8" fill="none" stroke="#1414a0" strokeWidth="1.3" /><path d="M2 7h13" stroke="#e08070" strokeWidth="1.2" /><path d="M9 10h5" stroke="#888" /><path d="M11 6h4M13 6v6" stroke="#1414d0" strokeWidth="1.4" /></S>,
  <S><path d="M3 7h10" stroke="#e08070" strokeWidth="1.2" /><path d="M10 6h5M13 6v6" stroke="#1414d0" strokeWidth="1.4" /></S>,
  <S><rect x="3" y="4" width="10" height="8" fill="#a8bbcc" stroke="#2a52c8" strokeWidth="1" /><path d="M12 2.500h3M13.500 1v3M1 13.500h3M2.500 12v3" stroke="#1414d0" /></S>,
  <S><rect x="3" y="4" width="10" height="8" fill="#b9a8ac" stroke="#e81818" strokeWidth="1.2" /><path d="M12 2.500h3M13.500 1v3M1 13.500h3M2.500 12v3" stroke="#1414d0" /></S>,
  <S><path d="M3 13 11 5" stroke="#111" strokeWidth="1.8" /><path d="M8 3h6v6z" fill="#111" /><circle cx="3" cy="13" r="1.500" fill="none" stroke="#111" /></S>,
  <div className="flex items-center justify-center w-[12px] h-[12px] rounded-[3px] border border-[#5a8ae8] bg-[#b7c9d4] text-[9px] font-bold text-[#111]">T</div>,
  <div className="flex items-center justify-center w-[12px] h-[12px] rounded-full border border-[#5a8ae8] bg-[#b7c9d4] text-[9px] font-bold text-[#107010]">T</div>,
  <S><circle cx="4" cy="12" r="2" fill="none" stroke="#222" strokeWidth="1.2" /><circle cx="13" cy="4" r="2" fill="none" stroke="#222" strokeWidth="1.2" /><path d="M5.500 10.500 11.500 5.500" stroke="#222" strokeWidth="1.4" /></S>,
  lolli("#88ee88"), lolli("#44bb44"), lolli("#138a13", 1.8), lolli("#ee1818"),
  <S><g transform="rotate(-40 8.500 8)"><rect x="1" y="5.500" width="15" height="5" fill="#a8bcc6" stroke="#667a84" strokeWidth="1" /><path d="M4 5.500v2M7 5.500v2M10 5.500v2M13 5.500v2" stroke="#667a84" /></g></S>,
  <S><rect x="1" y="1" width="15" height="14" fill="#a9bcc0" /><path d="M1 2h15" stroke="#6fbf6f" strokeDasharray="2 1" /><path d="M1 13h15" stroke="#d88" strokeDasharray="2 1" /><path d="M2 12 6 8l3 2 6-6" fill="none" stroke="#dfe8ec" strokeWidth="1" /><rect x="1" y="10" width="15" height="3" fill="#d88" fillOpacity=".45" /></S>,
  ell("#ee2222", "#b9a8ac"), ell("#9a6a3a", "#a8a8a0"), ell("#2e8a2e", "#9cb8a0"), ell("#22dd22", "#9ccaa0"),
  dia("#333"), dia("#44bb33"), dia("#ee1818"),
  hl("#111"), hl("#f08a78"), hl("#22ee22"), hl("#138a13"), hl("#ee1818"), hl("#6a9ae8"), hl("#1414a0"),
  <S><path d="M8.500 1v14" stroke="#5a6a72" strokeWidth="1.4" /></S>,
  <S><path d="M1 13 10 4M1 13h11" fill="none" stroke="#e04040" strokeWidth="1" /><circle cx="11" cy="9" r="1.800" fill="none" stroke="#1414d0" strokeWidth="1.2" /></S>,
  <S><circle cx="8.500" cy="8" r="5.500" fill="none" stroke="#e0703a" strokeWidth="1.1" /><path d="M7 8h3M8.500 6.500v3" stroke="#1414d0" strokeWidth="1.200" /><path d="M10 1l3 3" stroke="#e0703a" /></S>,
  <svg width="20" height="16" viewBox="0 0 20 16"><text x="1" y="15" fontSize="6" fontWeight="700" fill="#1414d0">x</text><text x="5" y="7" fontSize="6" fontWeight="700" fill="#1414d0">1</text><text x="11" y="5" fontSize="6" fontWeight="700" fill="#1414d0">3</text><text x="15" y="11" fontSize="6" fontWeight="700" fill="#1414d0">4</text><text x="8" y="15" fontSize="6" fontWeight="700" fill="#1414d0">2</text></svg>,
  <svg width="20" height="16" viewBox="0 0 20 16"><text x="1" y="15" fontSize="6" fontWeight="700" fill="#1414d0">a</text><text x="12" y="7" fontSize="7" fontWeight="700" fill="#1414d0">b</text><text x="10" y="15" fontSize="6" fontWeight="700" fill="#1414d0">c</text><path d="M2 8 8 3" stroke="#1414d0" strokeDasharray="1 1" /></svg>,
  <Check size={15} strokeWidth={4} color="#3aa83a" />,
  <ThumbsUp size={14} fill="#44b044" color="#2e8a2e" strokeWidth={1.4} />,
  <X size={15} strokeWidth={5} color="#ee1818" />,
];
const SideBar = () => (
  <div className="flex flex-col items-center w-[23px] shrink-0 bg-[#a4bbc7] border-l border-[#8ea6b2] border-r border-r-[#7f98a4] overflow-hidden">
    <div className="flex items-center justify-center h-[10.800px] w-full shrink-0"><ChevronUp size={8} strokeWidth={3} color="#5d7582" /></div>
    {sideIcons.map((ic, i) => (
      <div key={i} className="flex items-center justify-center h-[18.375px] w-full shrink-0">{ic}</div>
    ))}
    <div className="flex items-center justify-center h-[11px] mt-[5px] w-full shrink-0 bg-[#b6cfd8]"><ChevronDown size={8} strokeWidth={3} color="#222222" /></div>
    <div className="relative flex items-center justify-center h-[22px] mt-[3px] w-full shrink-0">
      <svg width="16" height="17" viewBox="0 0 16 17"><rect x="1" y="3" width="9" height="11" fill="#eef2f4" stroke="#7a8a92" /><rect x="5" y="6" width="9" height="9" fill="#dfe6ea" stroke="#333" /><path d="M7 9h5M7 11h5" stroke="#333" /><circle cx="3.500" cy="3" r="2.800" fill="#1a8a1a" /></svg>
    </div>
    <div className="flex items-center justify-center h-[14px] mt-[6px] w-full shrink-0 text-[#333333] text-[9px] font-bold leading-none">•••</div>
  </div>
);

/* bottom bar */
const BottomBar = () => (
  <div className="flex items-center h-[16px] shrink-0 bg-[#a9c6d2] border-t border-[#7f98a4]">
    <div className="flex items-center justify-center w-[23px] h-full shrink-0 border-r border-[#7f98a4]">
      <svg width="15" height="14" viewBox="0 0 15 14"><path d="M1 13V4l5 9z" fill="#e8b23a" stroke="#8a6a1a" strokeWidth=".6" /><path d="M5 11 12 2l2 1.500-7 9z" fill="#33aa44" stroke="#1a6a2a" strokeWidth=".6" /><path d="M11 2l1 .800" stroke="#e03030" strokeWidth="1.500" /></svg>
    </div>
    <div className="flex items-center gap-[4px] pl-[2px] w-[100px] shrink-0">
      <Share2 size={13} color="#f4f6f8" strokeWidth={2} />
      <MessagesSquare size={13} color="#2a7ad0" strokeWidth={2} />
      <svg width="13" height="14" viewBox="0 0 13 14"><rect x="2" y="1" width="9" height="12" fill="#e6ecef" stroke="#445" /><path d="M4 4h5" stroke="#e03030" /><path d="M4 7h5" stroke="#22aa44" /><path d="M4 10h5" stroke="#e03030" /></svg>
      <svg width="13" height="14" viewBox="0 0 13 14"><path d="M1 3h5v3H1z" fill="#22aa33" /><path d="M6 5h6v3H6z" fill="#e03030" /><path d="M3 8h6v3H3z" fill="#22aa33" /><path d="M5 1v12" stroke="#222" /></svg>
      <svg width="14" height="14" viewBox="0 0 14 14"><rect x="1" y="1" width="9" height="8" fill="#dfeaf2" stroke="#2a7ad0" /><rect x="4" y="5" width="9" height="8" fill="#eef4f8" stroke="#2a7ad0" /><path d="M5 11l3-3 2 2 2-3" fill="none" stroke="#e03030" /></svg>
      <span className="text-[10px] leading-none text-[#5d7582] font-bold">«</span>
    </div>
    <div className="flex items-center justify-center w-[9px] h-[12px] bg-[#c1d8e0] border border-[#7f98a4] shrink-0"><ChevronLeft size={7} strokeWidth={3} color="#222222" /></div>
    <div className="flex items-center flex-1 h-[12px] bg-[#a4bfca] border-y border-[#7f98a4]">
      <div className="ml-[52px] h-full flex-1 bg-gradient-to-b from-[#c4dde6] to-[#a8c8d4] border-l border-[#7f98a4]" />
    </div>
    <div className="flex items-center justify-center w-[12px] h-[12px] bg-[#c1d8e0] border border-[#7f98a4] shrink-0"><ChevronRight size={7} strokeWidth={3} color="#222222" /></div>
    <div className="flex items-center justify-between pl-[4px] pr-0 w-[125px] shrink-0">
      <Undo2 size={12} strokeWidth={2.4} color="#6a9ed8" />
      <Redo2 size={12} strokeWidth={2.4} color="#6a9ed8" />
      <svg width="13" height="14" viewBox="0 0 13 14"><path d="M2 12 7 7" stroke="#e03030" strokeWidth="2" /><rect x="7" y="2" width="5" height="10" fill="#33bb33" stroke="#111" strokeWidth=".6" /><path d="M8 5h3M8 8h3" stroke="#111" strokeWidth=".6" /></svg>
      <span className="flex items-center"><Search size={12} strokeWidth={2.4} color="#222222" /><svg width="5" height="12" viewBox="0 0 5 12"><path d="M2.500 1v10M1 3l1.500-2L4 3M1 9l1.500 2L4 9" fill="none" stroke="#1414d0" /></svg></span>
      <ZoomOut size={12} strokeWidth={2.4} color="#222222" />
      <ZoomIn size={12} strokeWidth={2.4} color="#222222" />
      <svg width="12" height="12" viewBox="0 0 12 12"><path d="M0 3h12" stroke="#444" strokeDasharray="1 1" /><path d="M6 4v6M4 8l2 2 2-2" fill="none" stroke="#1a5ad0" strokeWidth="1.400" /></svg>
    </div>
  </div>
);

const years = Array.from({ length: 32 }, (_, k) => 1978 + 2 * k);
const priceTicks: [number, string][] = [[46,"6.000"],[89,"5.500"],[133,"5.000"],[177,"4.500"],[221,"4.000"],[265,"3.500"],[309,"3.000"],[354,"2.500"],[397,"2.000"],[441.7,"1.500"],[485.7,"1.000"],[529.6,"500"]];

export default function App() {
  return (
    <div className="flex flex-col w-[1600px] h-[861px] overflow-hidden bg-white font-['Liberation_Sans',Arial,sans-serif] text-[#1c1c1c]">
      <TopBar />
      <div className="flex h-[827px] shrink-0">
        <SideBar />
        <div className="flex flex-col w-[1577px]">
          <div className="flex h-[557px] shrink-0">
            <div className="relative w-[1547px] shrink-0">
              <MainChart />
              <div className="absolute left-[1px] top-[1px] flex items-center h-[13px] text-[8px] font-bold">
                <div className="flex items-center gap-[3px] h-[13px] w-[35px] pl-[1px] bg-[#b6cfd8] border border-[#d4e3e9]">
                  <span className="flex items-center justify-center w-[8px] h-[8px] bg-[#f2f4f5] text-[#e01818] text-[9px] leading-none">+</span>
                  <span className="flex items-center justify-center w-[8px] h-[8px] bg-[#f2f4f5] text-[#18a018] text-[9px] leading-none">+</span>
                  <CloseDot />
                </div>
                <LegendTag w="w-[40px]" kind="empty" t="Precio" />
                <span className="flex flex-col justify-center items-center gap-[1px] w-[14px] h-[13px] bg-[#b6cfd8] border border-[#d4e3e9]"><span className="w-[8px] h-px bg-[#445]" /><span className="w-[8px] h-px bg-[#445]" /><span className="w-[8px] h-px bg-[#445]" /></span>
                <LegendTag w="w-[53px]" kind="empty" t="Cierre (W)" />
                <LegendTag w="w-[115px]" kind="gray" t="Tunel Domenec v4 (t t t t t)" />
                <LegendTag w="w-[95px]" kind="bars" t="Control Total Doc v.6" />
                <LegendTag w="w-[117px]" kind="black" t="Multi Avisos (3 f 3 1,5 70 f f)" />
              </div>
              <div className="absolute left-[9px] top-[14px] text-[32.5px] leading-[37px] font-bold text-black">
                <div>XAUUSD, Q</div>
                <div>Oro Cash (1E)</div>
              </div>
            </div>
            <Axis top={18}>
              {priceTicks.map((t) => <AxisText key={t[1]} y={t[0]} t={t[1]} />)}
              <AxisBox y={243} t="3.766,1" c="#22bb22" />
              <AxisBox y={293} t="3.190,2" c="#b02020" />
              <AxisBox y={393} t="2.059,4" c="#14148a" />
              <div className="absolute left-[4px] top-[564px] text-[8px] leading-[10px] font-bold text-[#333333]">0</div>
            </Axis>
          </div>
          <div className="flex h-[82px] shrink-0 border-t border-[#a9b8be]">
            <div className="relative w-[1547px] shrink-0 -mt-px">
              <SistemaChart />
              <PaneLegend top="top-0" kind="half" w="w-[126px]" t="Sistema de trenes Doc v4 (f f)" />
            </div>
            <Axis top={575}>
              <AxisBox y={581} t="100" />
              <AxisBox y={587} t="93,834" />
              <AxisBox y={595.500} t="80" />
              <AxisBox y={595} x={17} t="273" />
              <AxisText y={611} t="60" />
              <AxisText y={626} t="40" />
              <AxisBox y={603.500} t="76,840" c="#e02020" />
              <AxisBox y={618.500} t="50" c="#1818c0" />
              <AxisBox y={639} t="20" />
              <AxisBox y={652} t="0" />
            </Axis>
          </div>
          <div className="flex h-[62px] shrink-0 border-t border-[#a9b8be]">
            <div className="relative w-[1547px] shrink-0 -mt-px">
              <WillyChart />
              <PaneLegend top="top-0" kind="gray" w="w-[62px]" t="Willy Doc (t)" />
            </div>
            <Axis top={657}>
              <AxisBox y={663} t="0" />
              <AxisBox y={675} x={17} t="324" c="#22cc22" />
              <AxisBox y={679} t="-25" c="#1818a0" />
              <AxisBox y={690.500} t="-50" c="#1818c0" />
              <AxisBox y={703.500} t="-75" c="#d01818" />
              <AxisBox y={713.500} t="-100" />
            </Axis>
          </div>
          <div className="flex h-[66px] shrink-0 border-t border-[#a9b8be]">
            <div className="relative w-[1547px] shrink-0 -mt-px">
              <AwesomeChart />
              <PaneLegend top="top-0" kind="gray" w="w-[107px]" t="Awesome Evolution Doc" />
            </div>
            <Axis top={719}>
              <AxisBox y={735.500} t="1.954,0" c="#44ee44" />
              <AxisText y={751} t="1.000" />
              <AxisBox y={768.500} t="^" c="#1818c0" />
              <AxisBox y={778.500} t="0" c="#1818c0" />
            </Axis>
          </div>
          <div className="flex h-[47px] shrink-0 border-t border-[#a9b8be]">
            <div className="relative w-[1547px] shrink-0">
              <BarraChart />
              <PaneLegend top="top-0" kind="half" w="w-[146px]" t="Barra Fuerza Fondo Mercado v4 (f)" />
            </div>
            <Axis top={785}>
              <AxisText y={789} t="0,505" />
              <AxisBox y={809} t="0,5000" />
              <AxisText y={827} t="0,495" />
            </Axis>
          </div>
          <div className="relative h-[13px] shrink-0 border-t border-[#8ba2ad] bg-white text-[8px] font-bold text-[#222222]">
            {years.map((y, k) => (
              <span key={y} className="absolute top-[1px] w-[30px] -ml-[15px] text-center leading-[10px]" style={{ left: 16 + 48.1 * k }}>{y}</span>
            ))}
          </div>
        </div>
      </div>
      <BottomBar />
    </div>
  );
}
